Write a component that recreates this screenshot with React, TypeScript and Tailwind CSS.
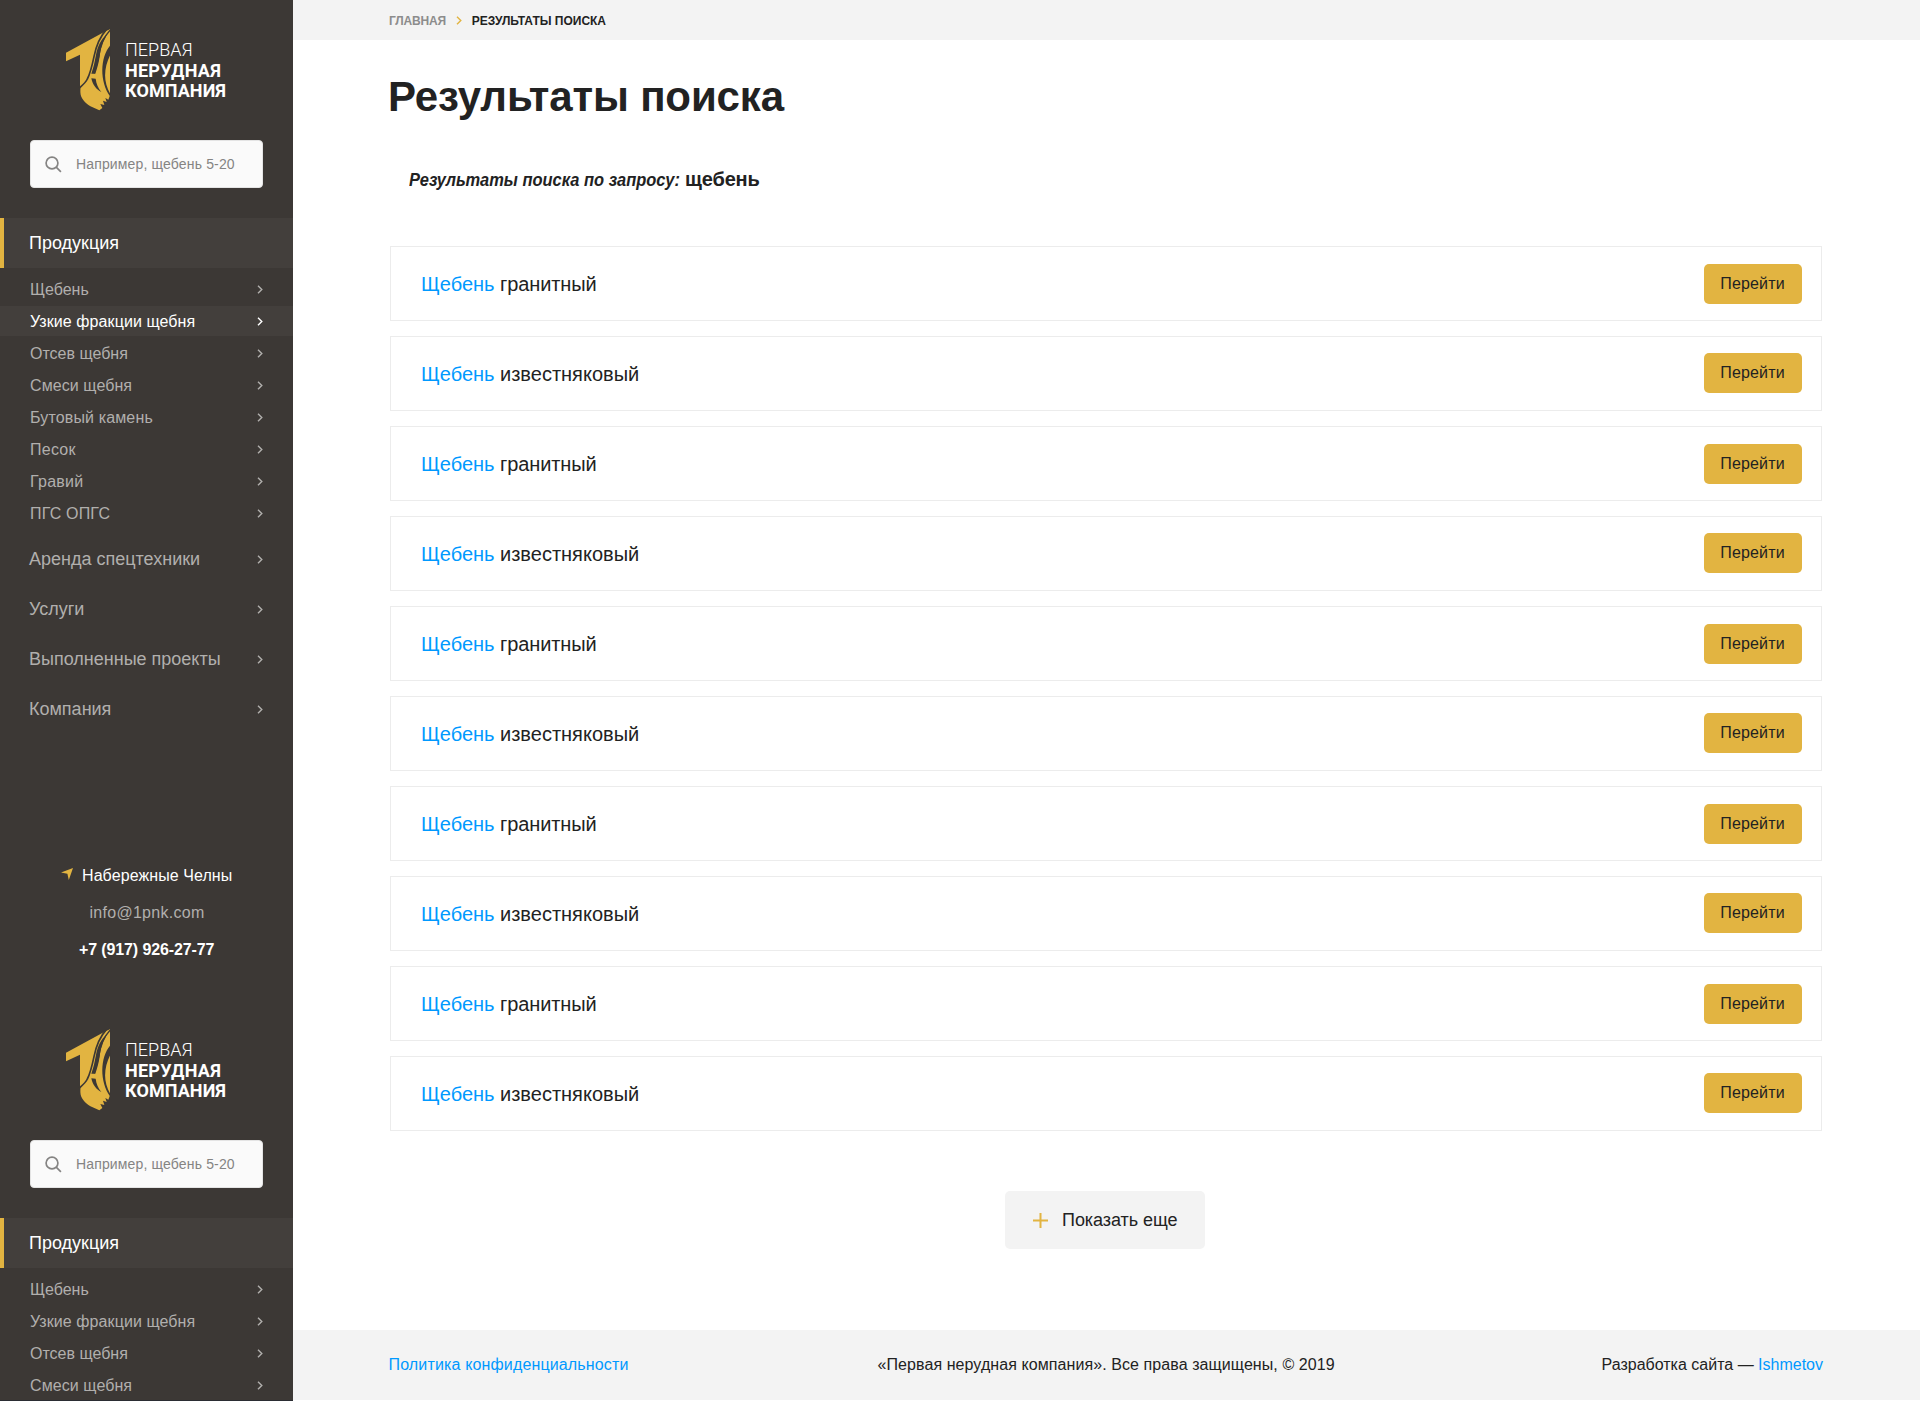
function LogoMark() {
  return (
    <svg className="h-[82px] w-[46px]" viewBox="45 27 138 246" fill="none">
      <path
        fill="#e2b441"
        d="M48 98 L168 33 L180 28 V226 L175 239 L166 234 L170 246 L159 242 L163 255 L151 252 L157 264 L148 271 L128 262 C110 253 96 240 92 224 C90 214 92 208 91 202 L90 196 V104 L48 124 Z"
      />
      <path stroke="#3c3835" strokeWidth="5" d="M169 29 C148 52 138 80 132 110 C127 134 121 160 112 177 C106 189 97 196 88 204" />
      <path stroke="#3c3835" strokeWidth="4" d="M180 31 C160 52 151 80 146 110 C142 132 136 146 133 160" />
      <path fill="#3c3835" d="M172 42 C156 66 152 84 149 110 C145 134 140 148 136 161 L124 161 C132 138 134 124 138 104 C143 80 152 58 172 42 Z" />
      <path fill="#3c3835" d="M124 175 L137 176 C139 192 144 203 154 216 C140 209 128 196 124 175 Z" />
      <path fill="#3c3835" d="M181 76 C150 112 148 186 181 230 V222 C160 186 160 146 181 104 Z" />
    </svg>
  );
}

function Chevron({ className }: { className: string }) {
  return (
    <svg className={className} viewBox="0 0 6 9" fill="none">
      <path d="M1 0.8 L4.8 4.5 L1 8.2" stroke="currentColor" strokeWidth="1.4" />
    </svg>
  );
}

function MenuRow({ label, active, size, tracking = "" }: { label: string; active?: boolean; size: "sm" | "lg"; tracking?: string }) {
  const box = size === "sm" ? "h-[30px] text-[16px] pl-[30px]" : "h-[50px] text-[18px] pl-[29px]";
  const nudge = size === "sm" ? "pt-[2px]" : "";
  return (
    <a className={`flex items-center justify-between pr-[30px] ${box} ${active ? "bg-[#433f3c] text-white" : "text-[#b1afad]"}`}>
      <span className={`${nudge} ${tracking}`}>{label}</span>
      <Chevron className="h-[9px] w-[6px]" />
    </a>
  );
}

const products: [string, string][] = [
  ["Щебень", ""],
  ["Узкие фракции щебня", "tracking-[0.08px]"],
  ["Отсев щебня", ""],
  ["Смеси щебня", "tracking-[0.08px]"],
  ["Бутовый камень", "tracking-[0.14px]"],
  ["Песок", "tracking-[0.25px]"],
  ["Гравий", "tracking-[0.25px]"],
  ["ПГС ОПГС", "tracking-[0.15px]"],
];

function SidebarPanel({ activeIndex }: { activeIndex: number }) {
  return (
    <div className="h-[1000px] shrink-0 bg-[#3c3835]">
      <div className="flex h-[140px] pl-[65px] pt-[29px]">
        <LogoMark />
        <div className="ml-[14px] flex flex-col pt-[11px] font-[Roboto,sans-serif] text-[18px] leading-[20.5px] text-white">
          <span className="font-light tracking-[0.05px]">ПЕРВАЯ</span>
          <span className="font-bold tracking-[0.25px]">НЕРУДНАЯ</span>
          <span className="font-bold tracking-[0.1px]">КОМПАНИЯ</span>
        </div>
      </div>
      <div className="mx-[30px] flex h-[48px] w-[233px] items-center rounded-[4px] border border-[#e4e4e4] bg-[#fafafa] pl-[14px]">
        <svg className="h-[17px] w-[17px]" viewBox="0 0 17 17" fill="none" stroke="#858483" strokeWidth="1.7">
          <circle cx="7" cy="7" r="5.9" />
          <path d="M11.2 11.2 L15.9 15.8" />
        </svg>
        <span className="ml-[14px] pt-px text-[14px] tracking-[0.15px] text-[#858483]">Например, щебень 5-20</span>
      </div>
      <div className="mt-[30px] flex h-[50px] items-center border-l-4 border-[#e2b441] bg-[#433f3c] pl-[25px] text-[18px] text-white">
        <span>Продукция</span>
      </div>
      <nav className="flex flex-col gap-[2px] py-[6px]">
        {products.map(([label, tracking], i) => (
          <MenuRow key={label} label={label} tracking={tracking} size="sm" active={i === activeIndex} />
        ))}
      </nav>
      <nav>
        <MenuRow size="lg" label="Аренда спецтехники" />
        <MenuRow size="lg" label="Услуги" />
        <MenuRow size="lg" label="Выполненные проекты" />
        <MenuRow size="lg" label="Компания" />
      </nav>
      <div className="mt-[123px] flex flex-col text-[16px] leading-[37px] text-white">
        <div className="flex h-[37px] items-center pl-[61px]">
          <svg className="mb-[3px] h-[12px] w-[12px]" viewBox="0 0 12 12">
            <path fill="#e2b441" d="M12 0 L7.8 12 L6.4 5.8 L0 4.4 Z" />
          </svg>
          <span className="ml-[9px] tracking-[0.08px]">Набережные Челны</span>
        </div>
        <span className="pl-[89.5px] tracking-[0.28px] text-[#b1afad]">info@1pnk.com</span>
        <span className="pl-[79px] font-bold tracking-[-0.12px]">+7 (917) 926-27-77</span>
      </div>
    </div>
  );
}

const results = Array.from({ length: 10 }, (_, i) => (i % 2 === 0 ? "гранитный" : "известняковый"));

export default function App() {
  return (
    <div className="flex h-[1401px] w-[1920px] overflow-hidden bg-white font-['Liberation_Sans',Arial,sans-serif] text-[#222222]">
      <aside className="flex w-[293px] shrink-0 flex-col overflow-hidden border-b border-[#2b2d33]">
        <SidebarPanel activeIndex={1} />
        <SidebarPanel activeIndex={-1} />
      </aside>
      <main className="flex w-[1627px] flex-col">
        <div className="flex h-[40px] shrink-0 items-center bg-[#f3f3f3] pl-[96px] text-[12px] font-bold">
          <span className="pt-[2px] tracking-[-0.2px] text-[#8c8c8c]">ГЛАВНАЯ</span>
          <Chevron className="ml-[10px] h-[9px] w-[6px] text-[#e2b441]" />
          <span className="ml-[10px] pt-[2px]">РЕЗУЛЬТАТЫ ПОИСКА</span>
        </div>
        <h1 className="ml-[95px] mt-[29px] h-[56px] text-[42px] leading-[56px] font-bold tracking-[-0.15px]">Результаты поиска</h1>
        <div className="ml-[116px] mt-[40px] flex h-[28px] items-baseline text-[20px] leading-[28px] font-bold">
          <span className="w-[276px] origin-left scale-x-[0.914] whitespace-nowrap text-[18px] italic">Результаты поиска по запросу:</span>
          <span className="tracking-[-0.15px]">щебень</span>
        </div>
        <div className="ml-[97px] mt-[53px] flex w-[1432px] flex-col gap-[15px]">
          {results.map((kind, i) => (
            <div key={i} className="flex h-[75px] items-start justify-between border border-[#ececec] pl-[30px] pr-[19px]">
              <div className="text-[20px] leading-[75px]">
                <span className="text-[#0099ff]">Щебень</span>{" "}
                <span className={i % 2 === 0 ? "tracking-[-0.1px]" : ""}>{kind}</span>
              </div>
              <button
                className={`h-[40px] w-[98px] rounded-[5px] bg-[#e2b441] pr-px text-[16px] tracking-[0.15px] ${i % 2 === 0 ? "mt-[17px]" : "mt-[16px]"}`}
              >
                Перейти
              </button>
            </div>
          ))}
        </div>
        <button className="ml-[712px] mt-[60px] flex h-[58px] w-[200px] shrink-0 items-center rounded-[5px] bg-[#f3f3f3] pl-[28px] text-[18px]">
          <svg className="h-[15px] w-[15px]" viewBox="0 0 15 15" fill="none" stroke="#e2b441" strokeWidth="2">
            <path d="M7.5 0 V15 M0 7.5 H15" />
          </svg>
          <span className="ml-[14px] pt-px tracking-[-0.05px]">Показать еще</span>
        </button>
        <footer className="mt-[81px] flex h-[70px] shrink-0 items-center justify-between bg-[#f3f3f3] pl-[95.5px] pr-[97px] text-[16px]">
          <span className="w-[489px] tracking-[0.15px] text-[#0099ff]">Политика конфиденциальности</span>
          <span className="flex-1 tracking-[0.08px]">«Первая нерудная компания». Все права защищены, © 2019</span>
          <span>
            Разработка сайта — <a className="text-[#0099ff]">Ishmetov</a>
          </span>
        </footer>
      </main>
    </div>
  );
}
